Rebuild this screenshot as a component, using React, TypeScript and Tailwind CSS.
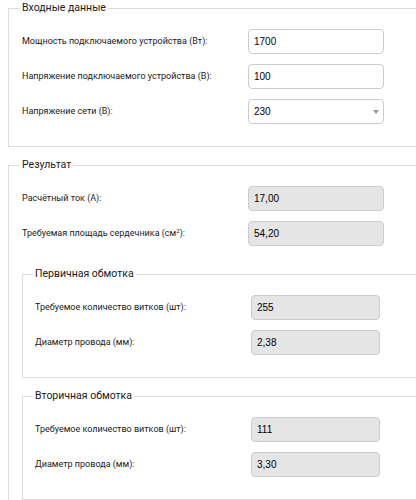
import type { ReactNode } from 'react'

// Row: label on the left, field on the right
function Row({ label, width, children }: { label: ReactNode; width: string; children: ReactNode }) {
  return (
    <div className="flex items-center">
      <div className={`${width} shrink-0 text-[9px] text-[#1a1a1a] font-['Roboto',sans-serif]`}>{label}</div>
      {children}
    </div>
  )
}

function TextInput({ value, readOnly = false, w }: { value: string; readOnly?: boolean; w: string }) {
  return (
    <input
      value={value}
      readOnly
      className={`${w} h-[25px] rounded-[4px] border border-[#cccccc] px-[5px] text-[10px] text-black font-['Liberation_Sans',Arial,sans-serif] outline-none ${
        readOnly ? 'bg-[#e5e5e5]' : 'bg-white'
      }`}
    />
  )
}

function Box({ title, children, nested = false }: { title: string; children: ReactNode; nested?: boolean }) {
  return (
    <fieldset className={`border border-r-0 border-[#dcdcdc] pb-[22px] ${nested ? 'pl-[12px]' : 'pl-[13px]'}`}>
      <legend className="-ml-[2px] px-[2px] h-4 leading-4 text-[10.5px] text-[#1a1a1a] font-['Roboto',sans-serif]">{title}</legend>
      <div className="pt-[13px] flex flex-col gap-[10px]">{children}</div>
    </fieldset>
  )
}

export default function App() {
  return (
    <div className="w-[416px] h-[500px] overflow-hidden bg-white pl-[8px]">
      <Box title="Входные данные">
        <Row label="Мощность подключаемого устройства (Вт):" width="w-[226px]">
          <TextInput value="1700" w="w-[136px]" />
        </Row>
        <Row label="Напряжение подключаемого устройства (В):" width="w-[226px]">
          <TextInput value="100" w="w-[136px]" />
        </Row>
        <Row label="Напряжение сети (В):" width="w-[226px]">
          <div className="relative w-[136px] h-[25px] rounded-[4px] border border-[#cccccc] bg-white px-[5px] flex items-center text-[10px] text-black font-['Liberation_Sans',Arial,sans-serif]">
            230
            <span className="absolute right-[4px] top-[10px] w-0 h-0 border-l-[3px] border-r-[3px] border-t-[4px] border-l-transparent border-r-transparent border-t-[#999]" />
          </div>
        </Row>
      </Box>

      <div className="mt-[10px]">
        <fieldset className="border border-r-0 border-[#dcdcdc] pl-[13px] pb-[22px]">
          <legend className="-ml-[2px] px-[2px] h-4 leading-4 text-[10.5px] text-[#1a1a1a] font-['Roboto',sans-serif]">Результат</legend>
          <div className="pt-[13px] flex flex-col gap-[10px]">
            <Row label="Расчётный ток (А):" width="w-[226px]">
              <TextInput value="17,00" readOnly w="w-[136px]" />
            </Row>
            <Row
              label={
                <>
                  Требуемая площадь сердечника (см<sup className="text-[6px]">2</sup>):
                </>
              }
              width="w-[226px]"
            >
              <TextInput value="54,20" readOnly w="w-[136px]" />
            </Row>
          </div>

          <div className="mt-[20px]">
            <Box title="Первичная обмотка" nested>
              <Row label="Требуемое количество витков (шт):" width="w-[216px]">
                <TextInput value="255" readOnly w="w-[129px]" />
              </Row>
              <Row label="Диаметр провода (мм):" width="w-[216px]">
                <TextInput value="2,38" readOnly w="w-[129px]" />
              </Row>
            </Box>
          </div>

          <div className="mt-[10px]">
            <Box title="Вторичная обмотка" nested>
              <Row label="Требуемое количество витков (шт):" width="w-[216px]">
                <TextInput value="111" readOnly w="w-[129px]" />
              </Row>
              <Row label="Диаметр провода (мм):" width="w-[216px]">
                <TextInput value="3,30" readOnly w="w-[129px]" />
              </Row>
            </Box>
          </div>
        </fieldset>
      </div>
    </div>
  )
}
